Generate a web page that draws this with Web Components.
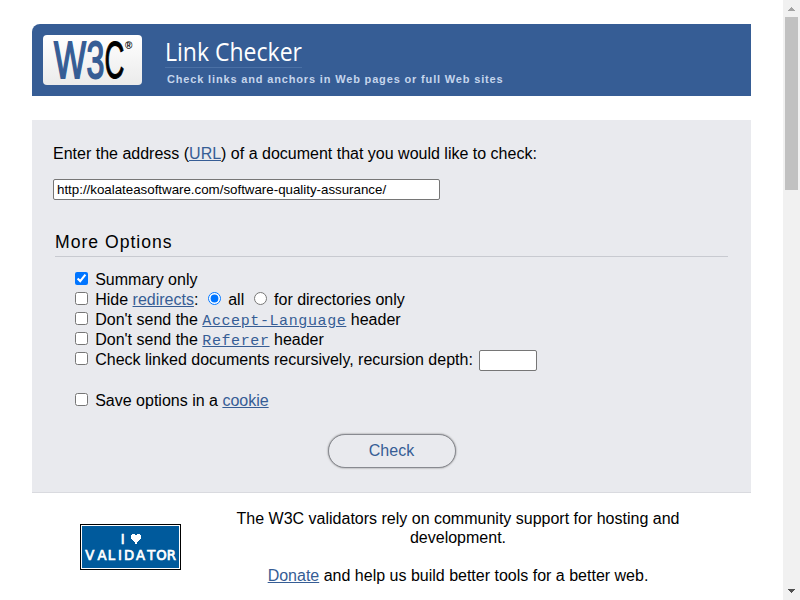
<!DOCTYPE html>
<html lang="en">
<head>
<meta charset="utf-8">
<title>Link Checker</title>
<style>
html,body{margin:0;height:100%;overflow:hidden;background:#fff}
body{font:16px/19px "Liberation Sans",Arial,sans-serif;color:#000}
a{color:#365d95;text-decoration:underline;text-decoration-thickness:1px}
</style>
</head>
<body>
<checker-page>
  <checker-banner>
    <w3c-logo slot="logo"></w3c-logo>
    <span slot="title">Link Checker</span>
    <span slot="tagline">Check links and anchors in Web pages or full Web sites</span>
  </checker-banner>
  <checker-form>
    <span slot="label">Enter the address (<a href="#">URL</a>) of a document that you would like to check:</span>
    <span slot="legend">More Options</span>
    <option-row checked>Summary only</option-row>
    <option-row>Hide <a href="#">redirects</a>: <radio-choice checked style="margin-left:5px">all</radio-choice> <radio-choice style="margin-left:5px">for directories only</radio-choice></option-row>
    <option-row>Don't send the <mono-link>Accept-Language</mono-link> header</option-row>
    <option-row>Don't send the <mono-link>Referer</mono-link> header</option-row>
    <option-row>Check linked documents recursively, recursion depth: <depth-field></depth-field></option-row>
    <option-row style="margin-top:21px">Save options in a <a href="#">cookie</a></option-row>
    <pill-button slot="action">Check</pill-button>
  </checker-form>
  <support-note>
    <validator-badge slot="badge"></validator-badge>
    <p slot="text" style="margin:0 0 19px">The W3C validators rely on community support for hosting and development.</p>
    <p slot="text" style="margin:0"><a href="#">Donate</a> and help us build better tools for a better web.</p>
  </support-note>
</checker-page>
<script>
const define = (name, html) => customElements.define(name, class extends HTMLElement {
  constructor() {
    super();
    const t = document.createElement('template');
    t.innerHTML = html;
    this.attachShadow({ mode: 'open' }).append(t.content.cloneNode(true));
  }
  connectedCallback() {
    const input = this.shadowRoot.querySelector('input');
    if (input && this.hasAttribute('checked')) input.checked = true;
  }
});

define('checker-page', `<style>
:host{display:flex;height:600px}
main{flex:1;padding:24px 32px 0;box-sizing:border-box;min-width:0}
</style><main><slot></slot></main><scroll-rail></scroll-rail>`);

define('scroll-rail', `<style>
:host{display:flex;flex-direction:column;width:17px;height:600px;background:#f1f1f1}
svg{display:block;width:17px;height:17px}
i{display:block;width:13px;height:173px;margin:0 2px;background:#c1c1c1}
b{flex:1}
</style><svg viewBox="0 0 17 17" shape-rendering="crispEdges"><path fill="#a3a3a3" d="M8 7h1v1h1v1h1v1h1v1H5v-1h1V9h1V8h1z"/></svg><i></i><b></b>
<svg viewBox="0 0 17 17" shape-rendering="crispEdges"><path fill="#505050" d="M5 6h7v1h-1v1h-1v1H9v1H8V9H7V8H6V7H5z"/></svg>`);

define('checker-banner', `<style>
:host{display:flex;height:72px;background:#365d95;border-radius:8px 0 0 0;box-sizing:border-box;padding:11px 0 0 11px}
.words{margin-left:23px;padding-top:1px}
h1{margin:0;width:137px;height:31px;border-bottom:1px solid #4a70a5;font:26px/30px "Open Sans","Noto Sans",sans-serif;color:#fff;white-space:nowrap}
h1 span{display:inline-block;transform-origin:0 50%;transform:scaleX(.885)}
p{margin:5px 0 0 2px;font-size:11px;line-height:13px;font-weight:bold;letter-spacing:.84px;color:#c5d5ec;white-space:nowrap}
</style><slot name="logo"></slot><div class="words"><h1><span><slot name="title"></slot></span></h1><p><slot name="tagline"></slot></p></div>`);

define('w3c-logo', `<style>
:host{display:block;width:99px;height:50px}
svg{display:block;overflow:visible}
</style><svg width="99" height="50" viewBox="0 0 99 50">
<defs><linearGradient id="g" x2="0" y2="1"><stop stop-color="#fff"/><stop offset="1" stop-color="#ebebeb"/></linearGradient></defs>
<rect width="99" height="50" rx="4" fill="url(#g)"/>
<g font-family="Liberation Sans, Arial, sans-serif" font-size="51">
<text transform="translate(11 43) scale(.665 1)" fill="#365d95" stroke="#365d95" stroke-width="1.8">W</text>
<text transform="translate(43.5 43) scale(.63 1)" fill="#365d95" stroke="#365d95" stroke-width="1.8">3</text>
<text transform="translate(61.5 43) scale(.54 1)" fill="#000" stroke="#000" stroke-width="1">C</text>
<text x="82" y="14" font-size="10" font-weight="bold">®</text></g></svg>`);

define('checker-form', `<style>
:host{display:block;height:373px;margin-top:24px;background:#e9eaee;border-bottom:1px solid #d9dadf;box-sizing:border-box;padding:24px 23px 0 21px}
.address{margin-top:16px;display:block;width:387px;height:21px;box-sizing:border-box;border:1px solid #767676;border-radius:2px;padding:1px 3px;font:13.33px "Liberation Sans",Arial,sans-serif;letter-spacing:-.01px;color:#000;background:#fff}
h2{margin:30px 0 0 2px;height:27px;border-bottom:1px solid #c8cad0;box-sizing:border-box;font-size:17.6px;line-height:25px;font-weight:normal;letter-spacing:1px}
.label{height:19px;white-space:nowrap}
.rows{display:flex;flex-direction:column;padding:13px 0 0 22px;height:141px}
.action{display:flex;justify-content:center;padding:23px 0 0 2px}
</style><div class="label"><slot name="label"></slot></div>
<input class="address" value="http://koalateasoftware.com/software-quality-assurance/">
<h2><slot name="legend"></slot></h2><div class="rows"><slot></slot></div><div class="action"><slot name="action"></slot></div>`);

define('option-row', `<style>
:host{display:flex;height:20px;line-height:20px;white-space:nowrap}
input{margin:2px 7.2px 0 0;width:13px;height:13px;flex:none}
</style><input type="checkbox"><div><slot></slot></div>`);

define('radio-choice', `<style>
:host{display:inline-flex;height:20px;line-height:20px;vertical-align:top}
input{margin:2px 7.4px 0 0;width:13px;height:13px}
</style><input type="radio"><span><slot></slot></span>`);

define('mono-link', `<style>
:host{display:inline-block;height:20px;vertical-align:top}
a{font:15px/23px "Liberation Mono","Courier New",monospace;letter-spacing:.6px;color:#365d95}
</style><a href="#"><slot></slot></a>`);

define('depth-field', `<style>
:host{display:inline-block;vertical-align:top;height:20px;margin-left:1.6px}
input{display:block;width:58px;height:21px;box-sizing:border-box;border:1px solid #767676;border-radius:2px;margin:0;background:#fff}
</style><input aria-label="Recursion depth">`);

define('pill-button', `<style>
:host{display:block}
button{display:block;width:128px;height:34px;border:1px solid #888a90;border-radius:17px;background:#e9eaee;box-shadow:0 0 2px #777;color:#365d95;font:16px "Liberation Sans",Arial,sans-serif;padding:0}
</style><button><slot></slot></button>`);

define('support-note', `<style>
:host{display:flex;padding:16px 48px 0}
.badge{width:101px;padding-top:15px}
.text{margin-left:41px;width:472px;text-align:center}
</style><div class="badge"><slot name="badge"></slot></div><div class="text"><slot name="text"></slot></div>`);

define('validator-badge', `<style>
:host{display:block;width:101px;height:46px}
svg{display:block}
</style><svg width="101" height="46" viewBox="0 0 101 46">
<rect width="101" height="46" shape-rendering="crispEdges"/><rect x="1" y="1" width="99" height="44" fill="#fff" shape-rendering="crispEdges"/><rect x="2" y="2" width="97" height="42" fill="#005a9c" shape-rendering="crispEdges"/>
<g fill="#fff" font-family="DejaVu Sans, sans-serif" font-size="13.2" stroke="#fff" stroke-width=".7">
<text x="40.8" y="20">I</text>
<text x="5.3 17.5 27.8 37.9 44 56 67.2 76.2 86.8" y="36">VALIDATOR</text></g>
<path fill="#fff" shape-rendering="crispEdges" d="M52 10h3v1h2v-1h3v1h1v4h-1v1h-1v1h-1v1h-1v2h-2v-2h-1v-1h-1v-1h-1v-1h-1v-4h1z"/></svg>`);
</script>
</body>
</html>
